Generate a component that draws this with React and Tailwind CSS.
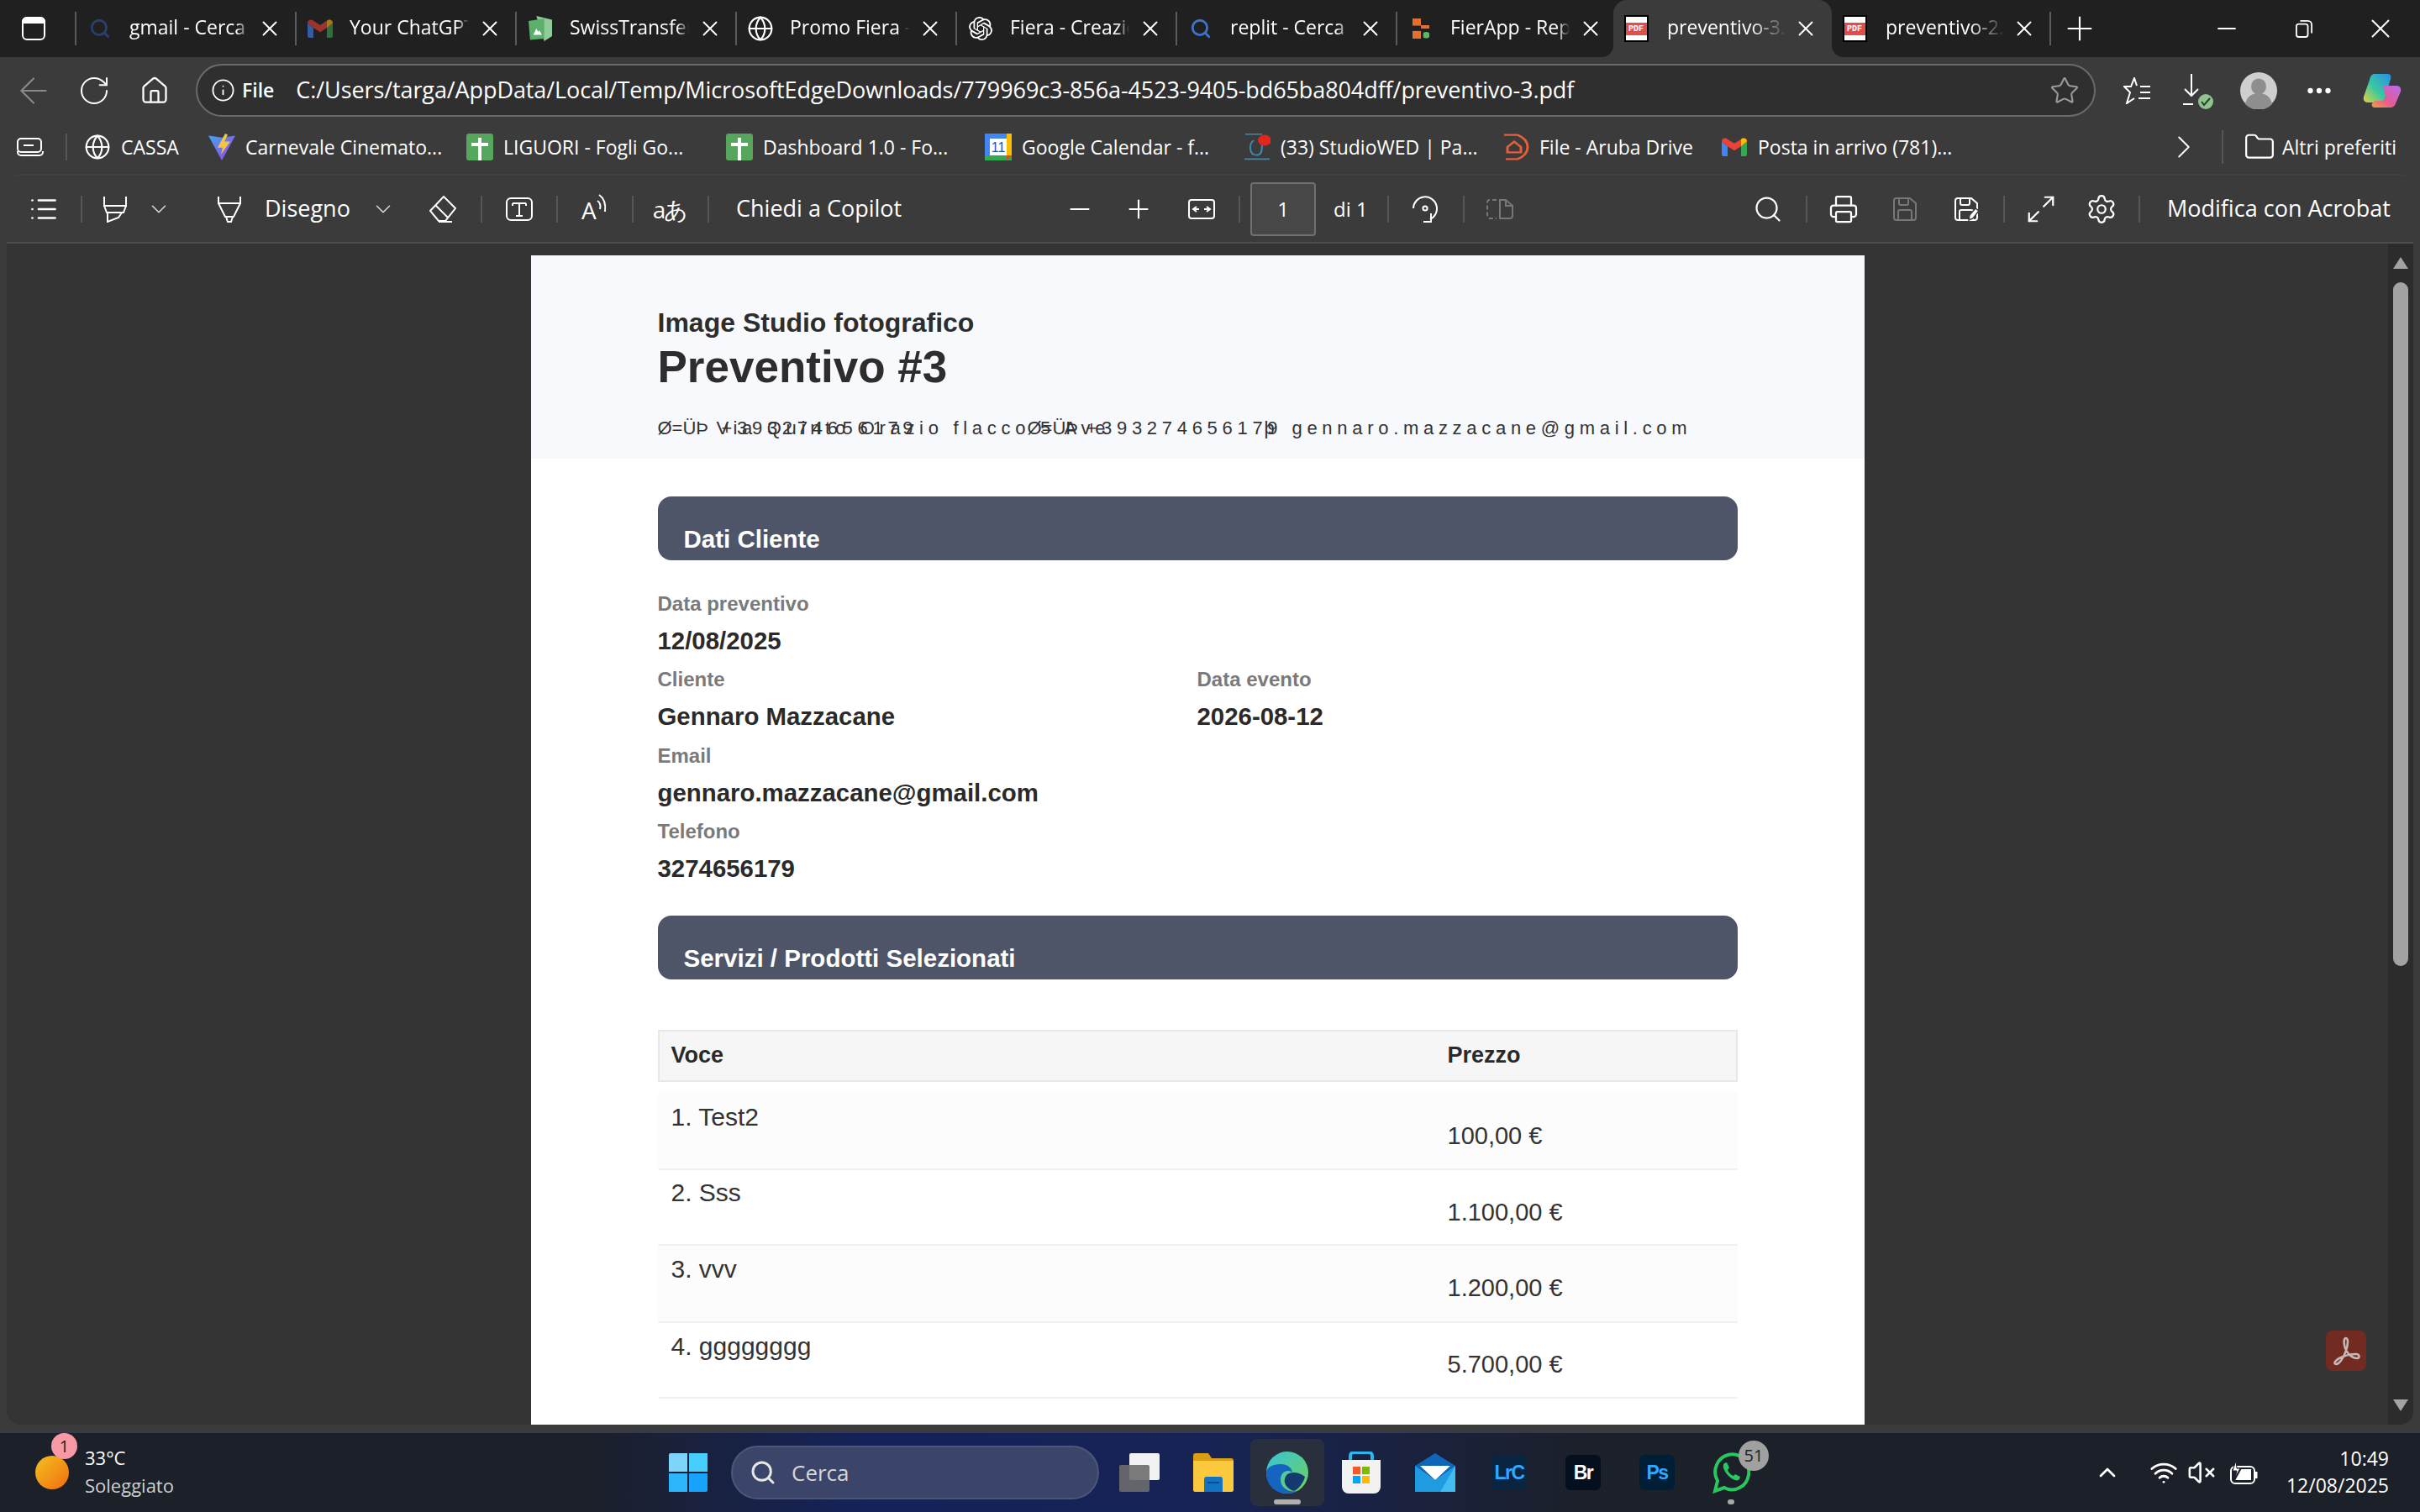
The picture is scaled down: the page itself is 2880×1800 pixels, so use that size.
import { ArrowLeft, RotateCw, Home, Info, Star, Globe, Plus, X, Minus, ChevronRight, ChevronDown, ChevronUp, Search, Folder, Printer, Settings, Ellipsis, Maximize2, Wifi, VolumeX, List } from 'lucide-react';
import { SiOpenai } from 'react-icons/si';

const ui = "font-['Open_Sans',sans-serif]";
const pdf = "font-['Liberation_Sans',Arial,sans-serif]";

// ---- favicons and small drawings
function SearchFav({ color }) {
  return <Search size={26} strokeWidth={2.6} color={color} />;
}

function GmailIcon({ dim }) {
  return (
    <svg width="30" height="22" viewBox="0 0 30 26" preserveAspectRatio="none" className={dim ? 'opacity-60' : ''}>
      <path d="M0 5v18a3 3 0 0 0 3 3h4V12z" fill="#4285f4" />
      <path d="M30 5v18a3 3 0 0 1-3 3h-4V12z" fill="#34a853" />
      <path d="M0 5c0-4 4-6 7-3l8 6 8-6c3-3 7-1 7 3l-7 7-8 6-8-6z" fill="#ea4335" />
      <path d="M23 2c3-3 7-1 7 3l-7 7z" fill="#fbbc04" />
    </svg>
  );
}

function SwissIcon() {
  return (
    <svg width="28" height="30" viewBox="0 0 30 40" preserveAspectRatio="none">
      <path d="M10 0l20 6v26l-10 8z" fill="#8fcc9a" />
      <path d="M0 8l20-4v32L2 38z" fill="#5cb06b" />
      <path d="M6 30l4-10 2 5 2-2 3 7z" fill="#fff" />
    </svg>
  );
}

function FierIcon() {
  return (
    <svg width="20" height="24" viewBox="0 0 22 42" preserveAspectRatio="none">
      <rect x="0" y="0" width="11" height="15" fill="#e2702e" />
      <rect x="11" y="14" width="11" height="7" fill="#e2702e" />
      <rect x="0" y="26" width="11" height="16" fill="#e2702e" />
      <rect x="14" y="28" width="8" height="13" rx="4" fill="#5fb56c" />
    </svg>
  );
}

function PdfIcon() {
  return (
    <div className="w-[29px] h-[32px] bg-white border-2 border-black flex items-center">
      <div className="w-full h-[15px] bg-[#e0504a] text-white text-[10px] leading-[15px] font-bold text-center font-['Liberation_Mono',monospace]">PDF</div>
    </div>
  );
}

function SheetsIcon() {
  return (
    <svg width="32" height="32" viewBox="0 0 32 32">
      <rect width="32" height="32" rx="3" fill="#56a65e" />
      <path d="M14 5h4v27h-4zM6 11h20v4H6z" fill="#fff" />
    </svg>
  );
}

function ViteIcon() {
  return (
    <svg width="32" height="32" viewBox="0 0 32 40" preserveAspectRatio="none">
      <defs>
        <linearGradient id="vg" x1="0" y1="0" x2="1" y2="1">
          <stop offset="0" stopColor="#41a5ee" />
          <stop offset="1" stopColor="#a040ea" />
        </linearGradient>
      </defs>
      <path d="M0 3l16 3 16-3-16 37z" fill="url(#vg)" />
      <path d="M20 0l-9 21h6l-2 10 11-19h-7l4-10z" fill="#f4c542" />
    </svg>
  );
}

function CalIcon() {
  return (
    <svg width="32" height="32" viewBox="0 0 32 32">
      <rect width="32" height="32" rx="2" fill="#fff" />
      <rect width="32" height="6" fill="#4285f4" />
      <rect width="6" height="32" fill="#4285f4" />
      <rect x="26" width="6" height="32" fill="#fbbc04" />
      <rect y="26" width="32" height="6" fill="#34a853" />
      <path d="M26 26h6l-6 6z" fill="#ea4335" />
      <text x="16" y="22" fontSize="16" textAnchor="middle" fill="#1a56b0" fontFamily="Liberation Sans">11</text>
    </svg>
  );
}

function WedIcon() {
  return (
    <svg width="32" height="32" viewBox="0 0 32 40" preserveAspectRatio="none">
      <path d="M2 1h20M1 38h30" stroke="#3b8bb0" strokeWidth="2" />
      <path d="M12 10c-6 6-6 22 4 22 6 0 6-10 6-16" fill="none" stroke="#3b8bb0" strokeWidth="2" />
      <circle cx="25" cy="10" r="8" fill="#e2261c" />
    </svg>
  );
}

function ArubaIcon() {
  return (
    <svg width="32" height="32" viewBox="0 0 32 40" preserveAspectRatio="none" fill="none" stroke="#e2603c" strokeWidth="3">
      <path d="M2 2h16c8 4 12 10 12 18s-4 14-12 18H4" />
      <path d="M6 28v-8l8-8 8 8v8z" />
    </svg>
  );
}

function HighlighterIcon() {
  return (
    <svg width="30" height="32" viewBox="0 0 30 32" fill="none" stroke="#fff" strokeWidth="2">
      <path d="M2 1v11h26V1M2 12l3 8h20l3-8M6 20v11l13-5 4-6" />
    </svg>
  );
}

function PenIcon() {
  return (
    <svg width="30" height="32" viewBox="0 0 30 32" fill="none" stroke="#fff" strokeWidth="2">
      <path d="M2 1v8h26V1M2 9l8 16h10l8-16M11 25l2 6h4l2-6" />
    </svg>
  );
}

function EraserIcon() {
  return (
    <svg width="32" height="32" viewBox="0 0 32 32" fill="none" stroke="#fff" strokeWidth="2">
      <path d="M17 1l14 14-12 15h-8L1 18zM7 11l15 15M11 31h16" />
    </svg>
  );
}

function TBoxIcon() {
  return (
    <svg width="32" height="28" viewBox="0 0 32 28" fill="none" stroke="#fff" strokeWidth="2">
      <rect x="1" y="1" width="30" height="26" rx="5" />
      <path d="M8 7h16M16 7v15M12 22h8M8 7v3M24 7v3" />
    </svg>
  );
}

function ReadIcon() {
  return (
    <div className="relative w-[32px] h-[32px] text-white">
      <span className={`${ui} absolute left-0 top-[-2px] text-[28px] leading-[38px]`}>A</span>
      <svg className="absolute right-0 top-[-2px]" width="14" height="22" viewBox="0 0 14 22" fill="none" stroke="#fff" strokeWidth="2">
        <path d="M3 1c6 4 8 12 7 20M1 8c3 2 4 6 3 10" />
      </svg>
    </div>
  );
}

function TranslateIcon() {
  return <span className={`${ui} text-white text-[28px] leading-none tracking-[-2px]`}>aあ</span>;
}

function FitIcon() {
  return (
    <svg width="32" height="24" viewBox="0 0 32 24" fill="none" stroke="#fff" strokeWidth="2">
      <rect x="1" y="1" width="30" height="22" rx="3" />
      <path d="M7 12h6M19 12h6M10 9l-4 3 4 3M22 9l4 3-4 3" />
    </svg>
  );
}

function RotateIcon() {
  return (
    <svg width="32" height="32" viewBox="0 0 32 32" fill="none" stroke="#fff" strokeWidth="2">
      <path d="M2 15A14 14 0 1 1 22 28" />
      <circle cx="16" cy="15" r="2.6" />
      <path d="M23 21v10h-9" />
    </svg>
  );
}

function PagesIcon() {
  return (
    <svg width="32" height="24" viewBox="0 0 32 24" fill="none" stroke="#777" strokeWidth="2">
      <path d="M12 1H4a3 3 0 0 0-3 3v16a3 3 0 0 0 3 3h8" strokeDasharray="5 3" />
      <path d="M16 1h7l8 7v12a3 3 0 0 1-3 3H16zM23 1v7h8" />
    </svg>
  );
}

function SaveIcon({ color, pencil }) {
  return (
    <svg width="28" height="28" viewBox="0 0 28 28" fill="none" stroke={color} strokeWidth="2">
      <path d="M4 1h16l7 6v17a3 3 0 0 1-3 3H4a3 3 0 0 1-3-3V4a3 3 0 0 1 3-3z" />
      <path d="M7 1v6a2 2 0 0 0 2 2h7a2 2 0 0 0 2-2V1M6 27V17a2 2 0 0 1 2-2h12a2 2 0 0 1 2 2v10" />
      {pencil && <path d="M17 27l1-6 7-8 4 3-7 9z" fill="#fff" stroke="#3b3b3b" strokeWidth="1.5" />}
    </svg>
  );
}

function FavListIcon() {
  return (
    <svg width="34" height="32" viewBox="0 0 34 32" fill="none" stroke="#fff" strokeWidth="2">
      <path d="M16 10L13 1l-4 10H1l7 7-4 13 9-6" />
      <path d="M20 11h12M20 18h12M18 25h14" />
    </svg>
  );
}

function DownloadIcon() {
  return (
    <div className="relative w-[36px] h-[40px]">
      <svg width="24" height="38" viewBox="0 0 24 38" fill="none" stroke="#fff" strokeWidth="2">
        <path d="M10 0v26M2 18l8 8 8-8M0 36h12" />
      </svg>
      <div className="absolute right-0 bottom-[-2px] w-[18px] h-[18px] rounded-full bg-[#8fc38f] flex items-center justify-center">
        <svg width="12" height="12" viewBox="0 0 12 12" fill="none" stroke="#26402a" strokeWidth="2"><path d="M1 6l3 4 7-8" /></svg>
      </div>
    </div>
  );
}

function AvatarIcon() {
  return (
    <svg width="44" height="44" viewBox="0 0 44 44">
      <circle cx="22" cy="22" r="22" fill="#cfcfcf" />
      <ellipse cx="22" cy="17" rx="9" ry="9.5" fill="#8e8e8e" />
      <path d="M6 38c2-10 9-13 16-13s14 3 16 13a22 22 0 0 1-32 0z" fill="#8e8e8e" />
    </svg>
  );
}

function CopilotIcon() {
  return (
    <svg width="46" height="40" viewBox="0 0 46 40">
      <defs>
        <linearGradient id="cp1" x1="1" y1="0" x2="0" y2="1">
          <stop offset="0" stopColor="#2a8ee8" />
          <stop offset="0.55" stopColor="#38c9a0" />
          <stop offset="1" stopColor="#e8d03c" />
        </linearGradient>
        <linearGradient id="cp2" x1="1" y1="0" x2="0" y2="1">
          <stop offset="0" stopColor="#b46cf0" />
          <stop offset="0.6" stopColor="#e85a90" />
          <stop offset="1" stopColor="#f0a040" />
        </linearGradient>
      </defs>
      <path d="M14 0h16c3 0 4 3 3 6l-7 24c-1 3-3 4-6 4H6c-4 0-6-3-5-7l7-20c1-5 3-7 6-7z" fill="url(#cp1)" />
      <path d="M24 14h16c4 0 6 3 5 7l-6 14c-1 3-3 5-7 5H14c-3 0-4-3-3-5l3-3h6c4 0 6-2 7-5z" fill="url(#cp2)" />
    </svg>
  );
}

function TabGroupIcon() {
  return (
    <svg width="32" height="22" viewBox="0 0 32 22" fill="none" stroke="#fff" strokeWidth="2">
      <rect x="1" y="1" width="28" height="16" rx="4" />
      <path d="M8 9h12" />
      <path d="M1 16v1a4 4 0 0 0 4 4h22a4 4 0 0 0 4-4v-1" />
    </svg>
  );
}

function SidebarIcon() {
  return (
    <svg width="28" height="28" viewBox="0 0 28 28" fill="none" stroke="#fff" strokeWidth="2">
      <rect x="1" y="1" width="26" height="26" rx="5" />
      <path d="M1 6a5 5 0 0 1 5-5h16a5 5 0 0 1 5 5v1H1z" fill="#fff" />
    </svg>
  );
}

function RestoreIcon() {
  return (
    <svg width="20" height="22" viewBox="0 0 22 24" fill="none" stroke="#fff" strokeWidth="2">
      <rect x="1" y="6" width="15" height="17" rx="3" />
      <path d="M6 2h10a5 5 0 0 1 5 5v11" />
    </svg>
  );
}

function BatteryIcon() {
  return (
    <svg width="34" height="28" viewBox="0 0 34 28" fill="none" stroke="#fff" strokeWidth="2">
      <rect x="1" y="7" width="28" height="20" rx="5" />
      <path d="M31 13v8" strokeWidth="3" />
      <path d="M8 22l6-11h10v11z" fill="#fff" />
      <path d="M7 0L3 12h5l-2 8 6-11H8z" fill="#fff" stroke="#1c2029" strokeWidth="1" />
    </svg>
  );
}

function AcrobatMark() {
  return (
    <svg width="36" height="36" viewBox="0 0 36 36" fill="none" stroke="#c4b7b4" strokeWidth="2.6">
      <path d="M18 3c-3 0-3 6-1 12 2 6 8 12 14 12 4 0 3-5-1-5-8 0-20 3-25 9-2 3 2 4 5 1 5-5 10-17 10-25 0-2-1-4-2-4z" />
    </svg>
  );
}

function StoreIcon() {
  return (
    <svg width="46" height="50" viewBox="0 0 46 50">
      <path d="M10 10V5a4 4 0 0 1 4-4h18a4 4 0 0 1 4 4v5" fill="none" stroke="#2bb6f0" strokeWidth="4" />
      <path d="M0 10h46v32a8 8 0 0 1-8 8H8a8 8 0 0 1-8-8z" fill="#f2f2f2" />
      <rect x="13" y="18" width="9" height="9" fill="#f05a28" />
      <rect x="24" y="18" width="9" height="9" fill="#7fba00" />
      <rect x="13" y="29" width="9" height="9" fill="#00a4ef" />
      <rect x="24" y="29" width="9" height="9" fill="#ffb900" />
    </svg>
  );
}

function MailIcon() {
  return (
    <svg width="48" height="46" viewBox="0 0 48 46">
      <path d="M24 0L48 15v31H0V15z" fill="#0f65b8" />
      <path d="M6 15h36L24 32z" fill="#fff" />
      <path d="M0 15l24 17 24-17v31H0z" fill="#1f9be0" />
      <path d="M48 15v31H30z" fill="#4cc6f2" opacity="0.8" />
    </svg>
  );
}

function ExplorerIcon() {
  return (
    <svg width="48" height="46" viewBox="0 0 48 46">
      <path d="M0 3a3 3 0 0 1 3-3h15l4 6h23a3 3 0 0 1 3 3v34a3 3 0 0 1-3 3H3a3 3 0 0 1-3-3z" fill="#d99e12" />
      <path d="M0 9h48v34a3 3 0 0 1-3 3H3a3 3 0 0 1-3-3z" fill="#fcc83e" />
      <path d="M13 31a3 3 0 0 1 3-3h16a3 3 0 0 1 3 3v15H13z" fill="#1273c4" />
      <rect x="17" y="34" width="14" height="2" fill="#0b4c8a" />
    </svg>
  );
}

function EdgeIcon() {
  return (
    <svg width="50" height="50" viewBox="0 0 50 50">
      <defs>
        <linearGradient id="eg" x1="0" y1="0" x2="1" y2="1">
          <stop offset="0" stopColor="#36c4d8" />
          <stop offset="1" stopColor="#6fd35a" />
        </linearGradient>
      </defs>
      <circle cx="25" cy="25" r="25" fill="url(#eg)" />
      <path d="M0 25C0 42 12 50 25 50c5 0 8-1 12-3-8 2-20-2-20-14 0-6 4-10 9-10s5 3 5 3c0-8-8-11-14-11C8 15 0 19 0 25z" fill="#1565c0" />
      <path d="M25 27c5-3 14-3 21 3-2 8-8 15-13 17-8-2-16-11-8-20z" fill="#143a70" />
    </svg>
  );
}

function AdobeTile({ label, bg, fg }) {
  return (
    <div className={`w-[42px] h-[42px] rounded-[6px] ${bg} ${fg} flex items-center justify-center font-['Liberation_Sans',sans-serif] font-bold text-[23px] tracking-[-1.5px]`}>{label}</div>
  );
}

function WhatsIcon() {
  return (
    <svg width="46" height="50" viewBox="0 0 46 50" fill="none" stroke="#29c75f" strokeWidth="4">
      <path d="M4 47l3-12a20 21 0 1 1 8 8z" />
      <path d="M15 14c-3 3 0 10 5 15s11 7 13 4l1-3-6-3-2 2c-3-1-6-4-7-7l2-3-3-6z" fill="#29c75f" stroke="none" />
    </svg>
  );
}

function Sep({ className = '' }) {
  return <div className={`w-[2px] h-[32px] bg-[#565656] shrink-0 ${className}`} />;
}

// ---- top bar
const tabs = [
  { title: 'gmail - Cerca', icon: <SearchFav color="#2b3f6e" /> },
  { title: 'Your ChatGPT plan', icon: <GmailIcon dim /> },
  { title: 'SwissTransfer.com', icon: <SwissIcon /> },
  { title: 'Promo Fiera - Crea', icon: <Globe size={32} color="#fff" strokeWidth={1.6} /> },
  { title: 'Fiera - Creazione', icon: <SiOpenai size={28} color="#fff" /> },
  { title: 'replit - Cerca', icon: <SearchFav color="#3f73c9" /> },
  { title: 'FierApp - Replit', icon: <FierIcon /> },
];

function Tab({ title, icon }) {
  return (
    <div className="w-[262px] h-full shrink-0 flex items-center">
      <div className="w-[2px] h-[40px] bg-[#5a5a5a] shrink-0" />
      <div className="w-[56px] flex justify-center shrink-0">{icon}</div>
      <div className={`ml-[7px] pb-[4px] w-[142px] shrink-0 overflow-hidden whitespace-nowrap text-[23px] text-white ${ui} [mask-image:linear-gradient(to_right,black_90%,transparent)]`}>{title}</div>
      <X size={30} color="#fff" strokeWidth={1.5} className="ml-[10px] shrink-0" />
    </div>
  );
}

function PdfTab({ title }) {
  return (
    <div className="w-[259px] h-full shrink-0 flex items-center">
      <div className="w-[54px] flex justify-center shrink-0"><PdfIcon /></div>
      <div className={`ml-[10px] pb-[4px] w-[142px] shrink-0 overflow-hidden whitespace-nowrap text-[23px] text-white ${ui} [mask-image:linear-gradient(to_right,black_70%,transparent)]`}>{title}</div>
      <X size={30} color="#fff" strokeWidth={1.5} className="ml-[8px] shrink-0" />
    </div>
  );
}

function TabBar() {
  return (
    <div className="h-[68px] shrink-0 flex bg-[#3b3b3b]">
      <div className="flex items-center bg-[#202020] rounded-br-[14px] h-full pl-[26px] w-[1920px] shrink-0">
        <div className="w-[63px] shrink-0"><SidebarIcon /></div>
        {tabs.map((t) => <Tab key={t.title} {...t} />)}
      </div>
      <div className="bg-[#202020] w-[260px] h-full shrink-0 relative">
        <div className="h-full bg-[#3b3b3b] rounded-t-[16px]">
          <PdfTab title="preventivo-3.pdf" />
        </div>
      </div>
      <div className="flex-1 flex items-center bg-[#202020] rounded-bl-[14px] h-full">
        <PdfTab title="preventivo-2.pdf" />
        <div className="w-[2px] h-[40px] bg-[#5a5a5a] shrink-0" />
        <Plus size={46} color="#fff" strokeWidth={1.1} className="ml-[11px] shrink-0" />
        <Minus size={34} color="#fff" strokeWidth={1.4} className="ml-[135px] shrink-0" />
        <div className="ml-[65px]"><RestoreIcon /></div>
        <X size={38} color="#fff" strokeWidth={1.2} className="ml-[62px] shrink-0" />
      </div>
    </div>
  );
}

function Cell({ className = '', children }) {
  return <div className={`w-[72px] h-[44px] shrink-0 flex items-center justify-center ${className}`}>{children}</div>;
}

function AddressRow() {
  return (
    <div className="h-[72px] shrink-0 flex items-center pl-[4px] pt-[7px]">
      <Cell><ArrowLeft size={50} color="#8a8a8a" strokeWidth={1} /></Cell>
      <Cell><RotateCw size={40} color="#fff" strokeWidth={1.2} /></Cell>
      <Cell><Home size={36} color="#fff" strokeWidth={1.5} /></Cell>
      <div className="ml-[13px] w-[2261px] h-[63px] rounded-full border-2 border-[#6a6a6a] bg-[#2f2f2f] flex items-center pl-[16px] shrink-0">
        <Info size={29} color="#fff" strokeWidth={1.5} />
        <span className={`${ui} font-semibold text-white text-[23px] ml-[8px]`}>File</span>
        <span className={`${ui} text-white text-[27px] ml-[26px] tracking-[-0.1px] whitespace-nowrap`}>C:/Users/targa/AppData/Local/Temp/MicrosoftEdgeDownloads/779969c3-856a-4523-9405-bd65ba804dff/preventivo-3.pdf</span>
        <Star size={36} color="#9a9a9a" strokeWidth={1.4} className="ml-auto mr-[17px]" />
      </div>
      <Cell className="ml-[14px]"><FavListIcon /></Cell>
      <Cell><DownloadIcon /></Cell>
      <Cell><AvatarIcon /></Cell>
      <Cell><Ellipsis size={36} color="#fff" strokeWidth={2.2} /></Cell>
      <Cell className="ml-[3px]"><CopilotIcon /></Cell>
    </div>
  );
}

const bookmarks = [
  { w: 'w-[148px]', label: 'CASSA', icon: <Globe size={32} color="#fff" strokeWidth={1.6} /> },
  { w: 'w-[307px]', label: 'Carnevale Cinemato...', icon: <ViteIcon /> },
  { w: 'w-[309px]', label: 'LIGUORI - Fogli Go...', icon: <SheetsIcon /> },
  { w: 'w-[308px]', label: 'Dashboard 1.0 - Fo...', icon: <SheetsIcon /> },
  { w: 'w-[308px]', label: 'Google Calendar - f...', icon: <CalIcon /> },
  { w: 'w-[308px]', label: '(33) StudioWED | Pa...', icon: <WedIcon /> },
  { w: 'w-[260px]', label: 'File - Aruba Drive', icon: <ArubaIcon /> },
  { w: 'w-[520px]', label: 'Posta in arrivo (781)...', icon: <GmailIcon /> },
];

function BookmarkRow() {
  return (
    <div className="h-[67px] shrink-0 flex items-center pl-[20px] pt-[3px]">
      <TabGroupIcon />
      <Sep className="ml-[26px]" />
      <div className="ml-[20px] flex items-center">
        {bookmarks.map((b) => (
          <div key={b.label} className={`${b.w} shrink-0 flex items-center`}>
            <div className="w-[32px] h-[40px] shrink-0 flex items-center justify-center">{b.icon}</div>
            <span className={`${ui} text-white text-[23px] ml-[12px] whitespace-nowrap`}>{b.label}</span>
          </div>
        ))}
      </div>
      <ChevronRight size={46} color="#fff" strokeWidth={1} className="ml-[8px] shrink-0" />
      <Sep className="ml-[22px] h-[40px]" />
      <Folder size={38} color="#fff" strokeWidth={1.4} className="ml-[24px] shrink-0" />
      <span className={`${ui} text-white text-[23px] ml-[8px] whitespace-nowrap`}>Altri preferiti</span>
    </div>
  );
}

function PdfToolbar() {
  return (
    <div className="h-[83px] shrink-0 mx-[8px] rounded-t-[16px] border-t-2 border-[#414141] border-b-2 border-b-[#4e4e4e] flex items-center pl-[8px]">
      <Cell><List size={36} color="#fff" strokeWidth={1.8} /></Cell>
      <Sep className="ml-[8px]" />
      <Cell className="ml-[3px]"><HighlighterIcon /></Cell>
      <ChevronDown size={30} color="#ddd" strokeWidth={1.2} className="ml-[1px] shrink-0" />
      <div className="ml-[54px]"><PenIcon /></div>
      <span className={`${ui} text-white text-[27px] ml-[27px] w-[110px] shrink-0`}>Disegno</span>
      <ChevronDown size={30} color="#ddd" strokeWidth={1.2} className="ml-[16px] shrink-0" />
      <Cell className="ml-[20px]"><EraserIcon /></Cell>
      <Sep className="ml-[9px]" />
      <Cell className="ml-[8px]"><TBoxIcon /></Cell>
      <Sep className="ml-[8px]" />
      <Cell className="ml-[8px]"><ReadIcon /></Cell>
      <Sep className="ml-[8px]" />
      <Cell className="ml-[7px]"><TranslateIcon /></Cell>
      <Sep className="ml-[9px]" />
      <span className={`${ui} text-white text-[27px] ml-[32px] w-[210px] shrink-0 whitespace-nowrap`}>Chiedi a Copilot</span>
      <Minus size={36} color="#fff" strokeWidth={1.4} className="ml-[181px] shrink-0" />
      <Plus size={36} color="#fff" strokeWidth={1.4} className="ml-[34px] shrink-0" />
      <div className="ml-[41px]"><FitIcon /></div>
      <Sep className="ml-[28px]" />
      <div className={`${ui} ml-[12px] w-[78px] h-[64px] shrink-0 rounded-[4px] border-2 border-[#707070] bg-[#474747] text-white text-[24px] flex items-center justify-center`}>1</div>
      <span className={`${ui} text-white text-[24px] ml-[21px] w-[44px] shrink-0`}>di 1</span>
      <Sep className="ml-[20px]" />
      <div className="ml-[27px]"><RotateIcon /></div>
      <Sep className="ml-[29px]" />
      <div className="ml-[26px]"><PagesIcon /></div>
      <Search size={36} color="#fff" strokeWidth={1.5} className="ml-[285px] shrink-0" />
      <Sep className="ml-[27px]" />
      <Printer size={36} color="#fff" strokeWidth={1.5} className="ml-[25px] shrink-0" />
      <div className="ml-[41px]"><SaveIcon color="#777" /></div>
      <div className="ml-[45px]"><SaveIcon color="#fff" pencil /></div>
      <Sep className="ml-[30px]" />
      <Maximize2 size={38} color="#fff" strokeWidth={1.4} className="ml-[24px] shrink-0" />
      <Settings size={38} color="#fff" strokeWidth={1.4} className="ml-[34px] shrink-0" />
      <Sep className="ml-[25px]" />
      <span className={`${ui} text-white text-[27px] ml-[32px] whitespace-nowrap`}>Modifica con Acrobat</span>
    </div>
  );
}

// ---- pdf page
function Field({ label, value, className = '' }) {
  return (
    <div className={className}>
      <div className="text-[24px] font-bold leading-[44px] text-[#7a7a7a]">{label}</div>
      <div className="text-[29.4px] font-bold leading-[44px] text-[#2a2a2a]">{value}</div>
    </div>
  );
}

function SectionBar({ title, className = '' }) {
  return (
    <div className={`h-[76px] rounded-[16px] bg-[#4e5568] pl-[31px] pt-[32px] text-[29.5px] leading-[38px] font-bold text-white ${className}`}>{title}</div>
  );
}

// testo sovrapposto come nel PDF generato: gli spezzoni finiscono uno sopra l'altro
const layer = 'text-[22px] leading-[24px] text-[#333] whitespace-nowrap col-start-1 row-start-1';
const wide = `${layer} tracking-[5.7px]`;
const tight = `${layer} tracking-[0px]`;

function ContactLine() {
  return (
    <div className="mt-[31px] grid">
      <span className={tight}>Ø=ÜÞ</span>
      <span className={`${wide} pl-[70px]`}>Via Quinto Orazio flacco 5 Ave</span>
      <span className={`${wide} pl-[76px]`}>+393274656179</span>
      <span className={`${tight} pl-[440px]`}>Ø=ÜÞ</span>
      <span className={`${wide} pl-[510px]`}>+393274656179</span>
      <span className={`${tight} pl-[722px]`}>þ</span>
      <span className={`${wide} pl-[755px]`}>gennaro.mazzacane@gmail.com</span>
    </div>
  );
}

const rows = [
  { name: '1. Test2', price: '100,00 €', bg: 'bg-[#fcfcfc]', h: 'h-[92px]', nameTop: 'pt-[12px]', priceTop: 'pt-[34px]' },
  { name: '2. Sss', price: '1.100,00 €', bg: 'bg-white', h: 'h-[90px]', nameTop: 'pt-[10px]', priceTop: 'pt-[33px]' },
  { name: '3. vvv', price: '1.200,00 €', bg: 'bg-[#fcfcfc]', h: 'h-[92px]', nameTop: 'pt-[11px]', priceTop: 'pt-[33px]' },
  { name: '4. gggggggg', price: '5.700,00 €', bg: 'bg-white', h: 'h-[90px]', nameTop: 'pt-[11px]', priceTop: 'pt-[32px]' },
];

function PdfPage() {
  return (
    <div className={`w-[1587px] bg-white shrink-0 overflow-hidden ${pdf}`}>
      <div className="h-[242px] bg-[#f8f9fd] pl-[151px] pt-[59px]">
        <div className="text-[32px] leading-[42px] font-bold text-[#2d2d2d] whitespace-nowrap">Image Studio fotografico</div>
        <div className="mt-[2px] text-[53px] leading-[60px] font-bold text-[#2d2d2d] whitespace-nowrap">Preventivo #3</div>
        <ContactLine />
      </div>
      <div className="mx-[151px] pt-[45px]">
        <SectionBar title="Dati Cliente" />
        <Field className="mt-[30px]" label="Data preventivo" value="12/08/2025" />
        <div className="flex mt-[2px]">
          <Field className="w-[642px]" label="Cliente" value="Gennaro Mazzacane" />
          <Field label="Data evento" value="2026-08-12" />
        </div>
        <Field className="mt-[3px]" label="Email" value="gennaro.mazzacane@gmail.com" />
        <Field className="mt-[2px]" label="Telefono" value="3274656179" />
        <SectionBar className="mt-[34px]" title="Servizi / Prodotti Selezionati" />
        <div className="mt-[60px] h-[62px] pb-[2px] bg-[#f6f6f6] border-2 border-[#e8e8e8] flex items-center text-[27px] font-bold text-[#2a2a2a] pl-[14px]">
          <div className="w-[924px]">Voce</div>
          <div>Prezzo</div>
        </div>
        <div className="mt-[13px]">
          {rows.map((r) => (
            <div key={r.name} className={`${r.h} ${r.bg} border-b-2 border-[#f0f0f0] flex pl-[16px] leading-[34px] text-[#333]`}>
              <div className={`w-[924px] text-[30px] ${r.nameTop}`}>{r.name}</div>
              <div className={`text-[29px] ${r.priceTop}`}>{r.price}</div>
            </div>
          ))}
        </div>
      </div>
    </div>
  );
}

function ScrollBar() {
  return (
    <div className="w-[30px] shrink-0 bg-[#2c2c2c] flex flex-col items-center pt-[16px] pb-[16px]">
      <div className="w-0 h-0 border-x-[9px] border-x-transparent border-b-[14px] border-b-[#a3a3a3]" />
      <div className="mt-[16px] w-[18px] h-[814px] rounded-full bg-[#a3a3a3]" />
      <div className="mt-auto w-0 h-0 border-x-[9px] border-x-transparent border-t-[14px] border-t-[#a3a3a3]" />
    </div>
  );
}

function Viewer() {
  return (
    <div className="relative h-[1406px] shrink-0 mx-[8px] rounded-b-[16px] overflow-hidden bg-[#343434] flex">
      <div className="flex-1 flex justify-center pt-[14px]">
        <PdfPage />
      </div>
      <ScrollBar />
      {/* pulsante Acrobat sopra il documento */}
      <div className="absolute right-[56px] bottom-[64px] w-[48px] h-[48px] rounded-[8px] bg-[#722b20] flex items-center justify-center">
        <AcrobatMark />
      </div>
    </div>
  );
}

// ---- taskbar
function TaskSlot({ children, className = '' }) {
  return <div className={`w-[88px] h-[80px] shrink-0 flex items-center justify-center ${className}`}>{children}</div>;
}

function Taskbar() {
  return (
    <div className={`${ui} flex-1 border-t-2 border-[#353b4c] mt-[8px] flex items-center [background-image:linear-gradient(to_right,#1c2029_0%,#1c2029_24%,#14225a_36%,#172354_50%,#1c2029_66%,#1c2029_100%)]`}>
      <div className="w-[101px] shrink-0 pl-[42px] relative">
        <div className="w-[40px] h-[40px] rounded-full bg-gradient-to-br from-[#f0c020] to-[#f06a10]" />
        {/* contatore meteo */}
        <div className="absolute left-[61px] top-[-27px] w-[31px] h-[31px] rounded-full bg-[#f79aa6] text-[#222] text-[20px] flex items-center justify-center">1</div>
      </div>
      <div className="w-[695px] shrink-0 leading-[33px] pb-[2px]">
        <div className="text-white text-[22px]">33°C</div>
        <div className="text-[#d0d0d0] text-[22px]">Soleggiato</div>
      </div>
      <div className="w-[46px] h-[46px] shrink-0 grid grid-cols-2 gap-[2px]">
        <div className="bg-[#7ed4fb] rounded-tl-[2px]" />
        <div className="bg-[#45cdfc]" />
        <div className="bg-[#2cb5fa]" />
        <div className="bg-[#17a2fb] rounded-br-[2px]" />
      </div>
      <div className="ml-[28px] w-[438px] h-[64px] shrink-0 rounded-full bg-[#3b4569] border-2 border-[#4c5678] flex items-center pl-[20px]">
        <Search size={32} color="#e6e6e6" strokeWidth={2.2} />
        <span className="text-[#d6d6d6] text-[26px] ml-[18px]">Cerca</span>
      </div>
      <TaskSlot className="ml-[4px]">
        <div className="relative w-[48px] h-[46px]">
          <div className="absolute right-0 top-0 w-[36px] h-[32px] bg-[#f2f2f2] rounded-[2px]" />
          <div className="absolute left-0 bottom-0 w-[36px] h-[32px] bg-[#6d6d6d]/90 rounded-[2px]" />
        </div>
      </TaskSlot>
      <TaskSlot><ExplorerIcon /></TaskSlot>
      <TaskSlot className="bg-[#2a2f3e] rounded-[8px] relative">
        <EdgeIcon />
        <div className="absolute bottom-[2px] w-[32px] h-[6px] rounded-full bg-[#b0b0b0]" />
      </TaskSlot>
      <TaskSlot><StoreIcon /></TaskSlot>
      <TaskSlot><MailIcon /></TaskSlot>
      <TaskSlot><AdobeTile label="LrC" bg="bg-[#0a2540]" fg="text-[#31a8ff]" /></TaskSlot>
      <TaskSlot><AdobeTile label="Br" bg="bg-[#05101f]" fg="text-white" /></TaskSlot>
      <TaskSlot><AdobeTile label="Ps" bg="bg-[#001e36]" fg="text-[#31a8ff]" /></TaskSlot>
      <TaskSlot className="relative">
        <WhatsIcon />
        <div className="absolute right-[-1px] top-[2px] w-[36px] h-[36px] rounded-full bg-[#a0a0a0] text-[#222] text-[20px] flex items-center justify-center">51</div>
        <div className="absolute bottom-[2px] w-[8px] h-[6px] rounded-full bg-[#a8a8a8]" />
      </TaskSlot>
      <ChevronUp size={32} color="#fff" strokeWidth={2} className="ml-[388px] shrink-0" />
      <Wifi size={34} color="#fff" strokeWidth={2} className="ml-[34px] shrink-0" />
      <VolumeX size={34} color="#fff" strokeWidth={1.8} className="ml-[11px] shrink-0" />
      <div className="ml-[17px] shrink-0"><BatteryIcon /></div>
      <div className="ml-auto pr-[37px] pb-[2px] text-right text-white text-[23px] leading-[32px]">
        <div>10:49</div>
        <div>12/08/2025</div>
      </div>
    </div>
  );
}

export default function App() {
  return (
    <div className={`w-[2880px] h-[1800px] flex flex-col overflow-hidden bg-[#3b3b3b] ${ui}`}>
      <TabBar />
      <AddressRow />
      <BookmarkRow />
      <PdfToolbar />
      <Viewer />
      <Taskbar />
    </div>
  );
}
